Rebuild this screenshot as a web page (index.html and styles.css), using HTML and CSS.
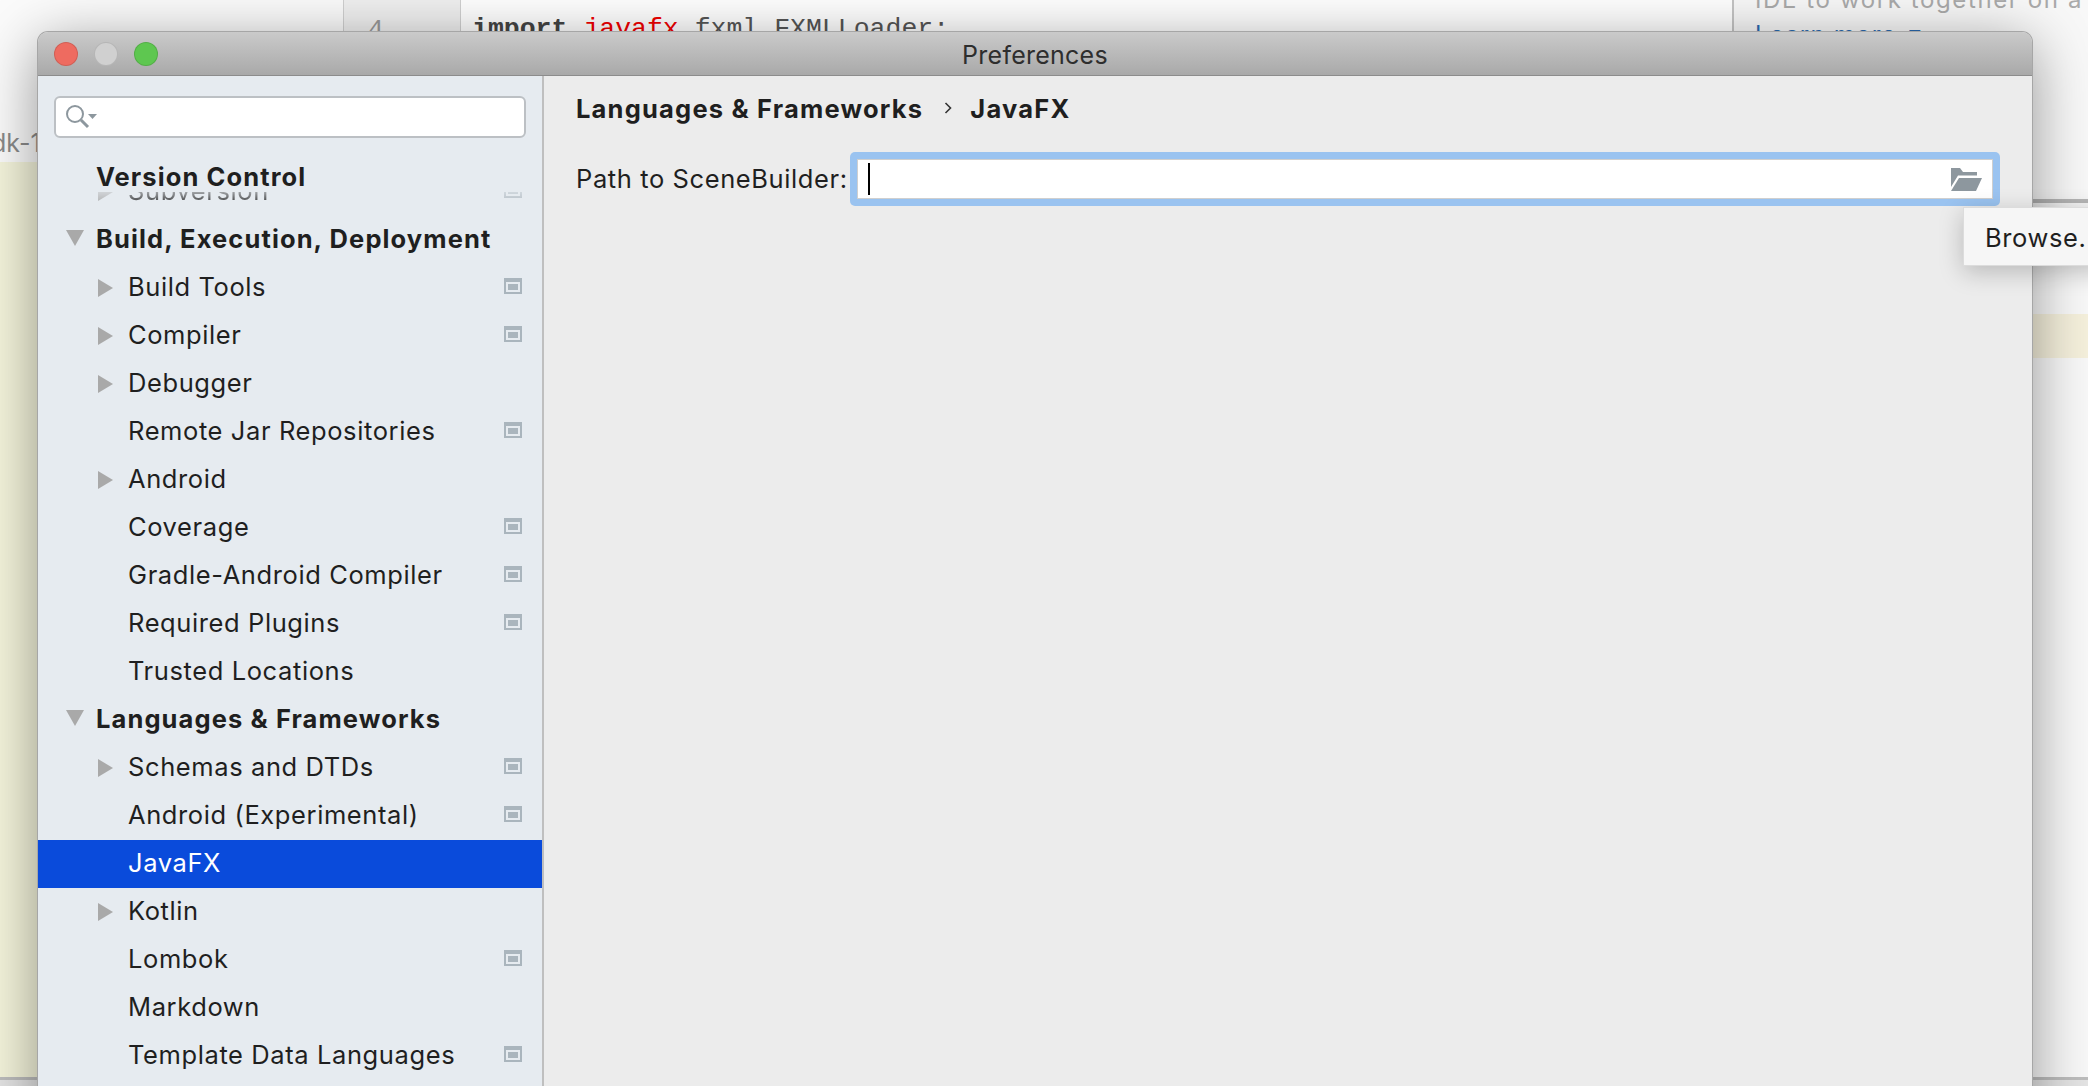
FILE: index.html
```html
<!DOCTYPE html>
<html lang="en">
<head>
<meta charset="UTF-8" />
<title>Preferences</title>
<link rel="stylesheet" href="styles.css">
</head>
<body>

<!-- IDE window behind the dialog -->
<div class="ide">
  <div class="ide-main">
    <div class="ide-left">
      <div class="jdk-label">dk-11</div>
      <div class="ide-left-fill"></div>
    </div>
    <div class="gutter"><span class="line-no">4</span></div>
    <div class="code">
      <div class="code-line"><b>import</b> <span class="code-err">javafx</span>.fxml.FXMLLoader;</div>
    </div>
    <div class="notice">
      <div class="notice-text">IDE to work together on a</div>
      <div class="notice-link">Learn more &nearr;</div>
      <div class="notice-rule"></div>
      <div class="notice-band"></div>
    </div>
  </div>
  <div class="ide-status"></div>
</div>

<!-- Preferences dialog -->
<div class="dialog">
  <div class="titlebar">
    <div class="lights">
      <span class="light light-red"></span>
      <span class="light light-grey"></span>
      <span class="light light-green"></span>
    </div>
    <div class="title">Preferences</div>
  </div>

  <div class="dialog-body">
    <div class="sidebar">
      <div class="search-wrap">
        <div class="search">
          <svg class="search-icon" width="32" height="28" viewBox="0 0 32 28">
            <circle cx="9" cy="11" r="8" fill="none" stroke="#8d979e" stroke-width="2"/>
            <path d="M15 17 L22 24" stroke="#8d979e" stroke-width="3" fill="none"/>
            <path d="M22 11 H31 L26.500 16 Z" fill="#8d979e"/>
          </svg>
        </div>
      </div>

      <div class="tree">
        <div class="row row-head sticky-head"><span class="row-text">Version Control</span></div>
        <div class="row-cut">
          <div class="row row-child">
            <span class="arrow-right"></span><span class="row-text">Subversion</span><span class="shared"></span>
          </div>
        </div>

        <div class="row row-head"><span class="arrow-down"></span><span class="row-text">Build, Execution, Deployment</span></div>
        <div class="row row-child"><span class="arrow-right"></span><span class="row-text">Build Tools</span><span class="shared"></span></div>
        <div class="row row-child"><span class="arrow-right"></span><span class="row-text">Compiler</span><span class="shared"></span></div>
        <div class="row row-child"><span class="arrow-right"></span><span class="row-text">Debugger</span></div>
        <div class="row row-child"><span class="row-text">Remote Jar Repositories</span><span class="shared"></span></div>
        <div class="row row-child"><span class="arrow-right"></span><span class="row-text">Android</span></div>
        <div class="row row-child"><span class="row-text">Coverage</span><span class="shared"></span></div>
        <div class="row row-child"><span class="row-text">Gradle-Android Compiler</span><span class="shared"></span></div>
        <div class="row row-child"><span class="row-text">Required Plugins</span><span class="shared"></span></div>
        <div class="row row-child"><span class="row-text">Trusted Locations</span></div>

        <div class="row row-head"><span class="arrow-down"></span><span class="row-text">Languages &amp; Frameworks</span></div>
        <div class="row row-child"><span class="arrow-right"></span><span class="row-text">Schemas and DTDs</span><span class="shared"></span></div>
        <div class="row row-child"><span class="row-text">Android (Experimental)</span><span class="shared"></span></div>
        <div class="row row-child row-selected"><span class="row-text">JavaFX</span></div>
        <div class="row row-child"><span class="arrow-right"></span><span class="row-text">Kotlin</span></div>
        <div class="row row-child"><span class="row-text">Lombok</span><span class="shared"></span></div>
        <div class="row row-child"><span class="row-text">Markdown</span></div>
        <div class="row row-child"><span class="row-text">Template Data Languages</span><span class="shared"></span></div>
      </div>
    </div>

    <div class="content">
      <div class="crumbs">
        <span>Languages &amp; Frameworks</span>
        <svg class="crumb-sep" width="10" height="14" viewBox="0 0 10 14">
          <path d="M2.500 2 L7.500 7 L2.500 12" fill="none" stroke="#333" stroke-width="1.600"/>
        </svg>
        <span>JavaFX</span>
      </div>
      <div class="path-row">
        <label class="path-label">Path to SceneBuilder:</label>
        <div class="path-ring">
          <div class="path-field">
            <span class="caret"></span>
            <svg class="folder" width="31" height="23" viewBox="0 0 31 23">
              <path d="M0 0 H9 L12 4 H26 V7.500 H7 L0 19 Z" fill="#8d979e"/>
              <path d="M8 10 H31 L25 23 H0 Z" fill="#8d979e"/>
            </svg>
          </div>
        </div>
      </div>
    </div>
  </div>
</div>

<div class="tooltip">Browse...</div>

</body>
</html>
```

FILE: styles.css
```css
html, body {
  margin: 0;
  height: 100%;
}

body {
  position: relative;
  height: 1086px;
  overflow: hidden;
  background: #fbfbfb;
  font-family: Inter, "Liberation Sans", sans-serif;
  color: #1f1f1f;
}

/* IDE behind the dialog */
.ide {
  display: flex;
  flex-direction: column;
  height: 1086px;
}
.ide-main {
  display: flex;
  flex: 1;
  min-height: 0;
}
.ide-left {
  width: 343px;
  display: flex;
  flex-direction: column;
}
.jdk-label {
  height: 162px;
  box-sizing: border-box;
  padding-top: 126px;
  margin-left: -9px;
  font-size: 25px;
  color: #8a8a8a;
  line-height: 34px;
}
.ide-left-fill {
  flex: 1;
  background: #f5f5dc;
}
.gutter {
  width: 116px;
  background: #f0f0f0;
  border-left: 1px solid #d0d0d0;
  border-right: 1px solid #d0d0d0;
  box-sizing: content-box;
  text-align: left;
}
.line-no {
  display: block;
  padding: 12px 0 0 24px;
  font: 26px/36px "Liberation Mono", monospace;
  color: #999;
}
.code {
  flex: 1;
  background: #fff;
  padding: 11px 0 0 11px;
}
.code-line {
  font: 26.500px/36px "Liberation Mono", monospace;
  color: #555;
}
.code-line b {
  color: #444;
}
.code-err {
  color: #f00000;
}
.notice {
  width: 354px;
  border-left: 2px solid #c4c4c4;
  background: #f8f8f8;
  display: flex;
  flex-direction: column;
}
.notice-text {
  height: 16px;
  margin-top: -16px;
  padding-left: 21px;
  font-size: 24px;
  letter-spacing: 1.600px;
  line-height: 32px;
  color: #aaa;
  white-space: nowrap;
}
.notice-link {
  margin-top: 19px;
  padding-left: 21px;
  height: 180px;
  font-size: 24px;
  letter-spacing: 1.200px;
  line-height: 32px;
  color: #2a6ab0;
}
.notice-rule {
  height: 4px;
  background: #b8b8b8;
}
.notice-band {
  height: 44px;
  margin-top: 111px;
  background: #f5f0dc;
}
.ide-status {
  height: 6px;
  background: #e4e4e4;
  border-top: 3px solid #bdbdbd;
}

/* dialog */
.dialog {
  position: absolute;
  left: 38px;
  top: 32px;
  width: 1994px;
  height: 1100px;
  display: flex;
  flex-direction: column;
  background: #ececec;
  border-radius: 10px 10px 0 0;
  box-shadow: 0 0 0 1px #a6a6a6, 0 12px 60px rgba(0, 0, 0, 0.42);
  overflow: hidden;
}
.titlebar {
  position: relative;
  height: 44px;
  flex: none;
  display: flex;
  align-items: center;
  justify-content: center;
  padding-top: 2px;
  background: linear-gradient(#cacaca, #a9a9a9);
  border-bottom: 1px solid #8c8c8c;
  box-sizing: border-box;
}
.lights {
  position: absolute;
  left: 16px;
  top: 10px;
  display: flex;
  gap: 16px;
}
.light {
  width: 24px;
  height: 24px;
  box-sizing: border-box;
  border-radius: 50%;
  border: 1px solid rgba(0, 0, 0, 0.12);
}
.light-red { background: #ee6b60; }
.light-grey { background: #d0d0d0; }
.light-green { background: #5ec750; }
.title {
  font-size: 25px;
  letter-spacing: 0.250px;
  color: #2e2e2e;
}

.dialog-body {
  flex: 1;
  display: flex;
  min-height: 0;
}

/* sidebar */
.sidebar {
  width: 504px;
  flex: none;
  background: #e6ebf0;
  border-right: 2px solid #bfbfbf;
}
.search-wrap {
  padding: 20px 16px 15px 16px;
}
.search {
  height: 42px;
  box-sizing: border-box;
  background: #fff;
  border: 2px solid #bcc0c4;
  border-radius: 6px;
  display: flex;
  align-items: center;
  padding-left: 10px;
}
.tree {
  overflow: hidden;
}
.row {
  height: 48px;
  flex: none;
  display: flex;
  align-items: center;
  position: relative;
  font-size: 25.500px;
  letter-spacing: 0.600px;
  white-space: nowrap;
}
.row-head {
  padding-left: 58px;
  font-weight: 700;
  letter-spacing: 1.100px;
}
.row-child {
  padding-left: 90px;
}
.sticky-head {
  height: 39px;
  align-items: flex-start;
}
.row-cut {
  height: 24px;
  display: flex;
  flex-direction: column;
  justify-content: flex-end;
  overflow: hidden;
  mask-image: linear-gradient(rgba(0, 0, 0, 0.35), #000 14px);
}
.row-text {
  line-height: 48px;
  margin-top: -2px;
}
.sticky-head .row-text {
  margin-top: 0;
}
.row-selected {
  background: #0a4bdb;
  color: #fff;
}
.arrow-right {
  position: absolute;
  left: 60px;
  top: 15px;
  width: 0;
  height: 0;
  border-left: 15px solid #a9a9a9;
  border-top: 9px solid transparent;
  border-bottom: 9px solid transparent;
}
.arrow-down {
  position: absolute;
  left: 28px;
  top: 14px;
  width: 0;
  height: 0;
  border-top: 16px solid #a9a9a9;
  border-left: 9px solid transparent;
  border-right: 9px solid transparent;
}
/* project-level settings mark */
.shared {
  position: absolute;
  left: 466px;
  top: 14px;
  width: 18px;
  height: 16px;
  box-sizing: border-box;
  background: #aab5bd;
  border: 2px solid #aab5bd;
  border-top-width: 4px;
}
.shared::after {
  content: "";
  display: block;
  width: 10px;
  height: 6px;
  border: 2px solid #e6ebf0;
}

/* right side */
.content {
  flex: 1;
  padding: 0 32px 0 32px;
}
.crumbs {
  display: flex;
  align-items: center;
  height: 64px;
  padding-bottom: 2px;
  box-sizing: content-box;
  font-size: 25.500px;
  font-weight: 700;
  letter-spacing: 1.200px;
}
.crumb-sep {
  margin: 0 17px 0 20px;
}
.path-row {
  display: flex;
  align-items: center;
  margin-top: 10px;
}
.path-label {
  width: 274px;
  flex: none;
  margin-top: -2px;
  font-size: 25.500px;
  letter-spacing: 0.600px;
  white-space: nowrap;
}
.path-ring {
  flex: 1;
  height: 54px;
  box-sizing: border-box;
  padding: 7px;
  background: #9ac3f0;
  border-radius: 5px;
}
.path-field {
  height: 100%;
  box-sizing: border-box;
  background: #fff;
  border: 1px solid #cfcfcf;
  display: flex;
  align-items: center;
  justify-content: space-between;
  padding: 0 10px 0 10px;
}
.caret {
  width: 2px;
  height: 32px;
  background: #000;
}

.tooltip {
  position: absolute;
  left: 1963px;
  top: 207px;
  width: 180px;
  height: 59px;
  box-sizing: border-box;
  padding-left: 21px;
  line-height: 59px;
  font-size: 25.500px;
  letter-spacing: 0.600px;
  white-space: nowrap;
  background: #f6f6f6;
  border: 1px solid #dcdcdc;
  box-shadow: 0 6px 24px rgba(0, 0, 0, 0.22);
}
```
